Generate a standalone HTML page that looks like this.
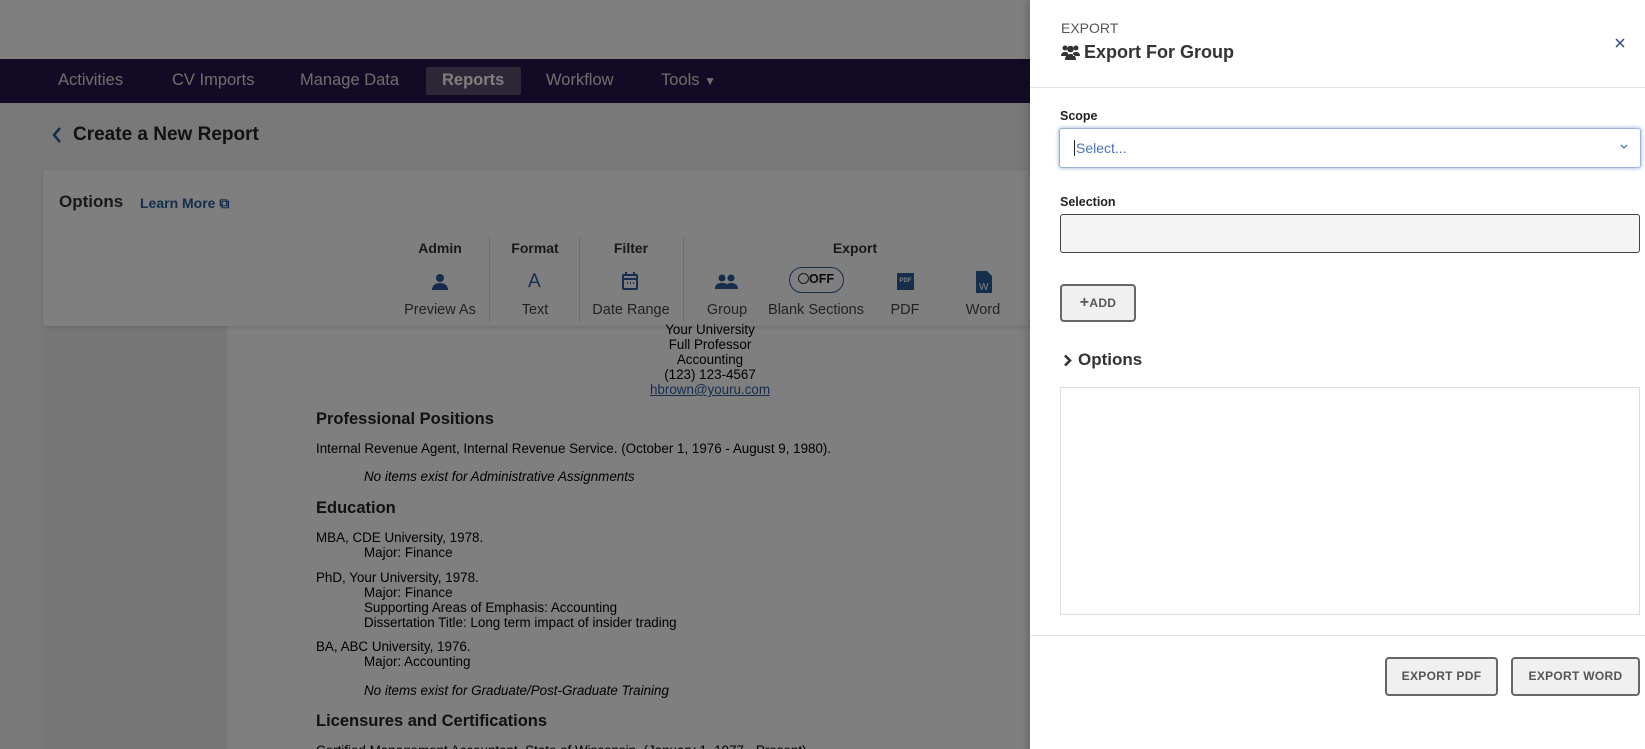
<!DOCTYPE html>
<html><head><meta charset="utf-8"><style>
*{box-sizing:border-box;margin:0;padding:0}
html{background:#808080;overflow:hidden}
body{width:1645px;height:749px;overflow:hidden;position:relative;background:#f3f3f3;font-family:"Liberation Sans",Arial,sans-serif;color:#333}
.a{position:absolute;white-space:nowrap}
.nav{position:absolute;left:0;top:59px;width:1645px;height:44px;background:#27164a}
.nav span{position:absolute;top:12px;font-size:16.5px;color:#ddd}
.card{position:absolute;left:43px;top:170px;width:1100px;height:156px;background:#fff;box-shadow:0 1px 4px rgba(0,0,0,.15);border-radius:3px}
.hd{font-size:14px;font-weight:bold;color:#333;text-align:center;width:100px;margin-left:-50px}
.lb{font-size:14.5px;color:#444;text-align:center;width:120px;margin-left:-60px}
.dv{position:absolute;top:236px;width:1px;height:86px;background:#ddd}
.doc{font-size:13.4px;color:#000;line-height:15px}
.h{font-size:16.5px;font-weight:bold;color:#222}
.ov{position:absolute;left:0;top:0;width:1030px;height:760px;background:rgba(0,0,0,.5)}
.panel{position:absolute;left:1030px;top:0;width:615px;height:760px;background:#fff;box-shadow:-2px 0 8px rgba(0,0,0,.2)}
.btn{position:absolute;border:2px solid #666;border-radius:4px;background:#f0f0f0;font-size:12px;font-weight:bold;color:#555;text-align:center;letter-spacing:.3px}
</style></head><body>
<div style="position:absolute;left:0;top:0;width:1645px;height:59px;background:#fff"></div>
<div class="nav">
<span style="left:58px">Activities</span>
<span style="left:172px">CV Imports</span>
<span style="left:300px">Manage Data</span>
<div style="position:absolute;left:426px;top:8px;width:95px;height:28px;background:#5a4e70;border-radius:2px"></div>
<span style="left:442px;font-weight:bold;color:#fff">Reports</span>
<span style="left:546px">Workflow</span>
<span style="left:661px">Tools <span style="position:static;font-size:12px">▼</span></span>
</div>
<svg class="a" style="left:52px;top:127px" width="10" height="16" viewBox="0 0 10 16" fill="none" stroke="#2a5d9a" stroke-width="2.5"><path d="M8 1L2 8l6 7"/></svg>
<div class="a" style="left:73px;top:124px;font-size:19px;font-weight:bold;color:#222">Create a New Report</div>
<div style="position:absolute;left:44px;top:326px;width:183px;height:430px;background:#ececec"></div>
<div style="position:absolute;left:227px;top:326px;width:803px;height:430px;background:#fff"></div>
<div class="card"></div>
<div class="a" style="left:59px;top:192px;font-size:17px;font-weight:bold;color:#333">Options</div>
<div class="a" style="left:140px;top:195px;font-size:14px;font-weight:bold;color:#2a5d9a">Learn More &#x29C9;</div>
<div class="a hd" style="left:440px;top:240px">Admin</div>
<div class="a hd" style="left:535px;top:240px">Format</div>
<div class="a hd" style="left:631px;top:240px">Filter</div>
<div class="a hd" style="left:855px;top:240px">Export</div>
<div class="dv" style="left:489px"></div><div class="dv" style="left:579px"></div><div class="dv" style="left:683px"></div>
<svg class="a" style="left:431px;top:273px" width="18" height="18" viewBox="0 0 18 18" fill="#2a5d9a"><circle cx="9" cy="5" r="4"/><path d="M1 17c0-5 4-7 8-7s8 2 8 7z"/></svg>
<div class="a" style="left:528px;top:271px;font-size:19px;color:#2a5d9a">A</div>
<svg class="a" style="left:621px;top:271px" width="18" height="20" viewBox="0 0 18 20" fill="none" stroke="#2a5d9a" stroke-width="2"><rect x="2" y="4" width="14" height="14" rx="1"/><path d="M5 1v4M13 1v4M2 8h14"/><path d="M6 12h1M9 12h1M12 12h1" /></svg>
<svg class="a" style="left:715px;top:274px" width="24" height="16" viewBox="0 0 24 16" fill="#2a5d9a"><circle cx="7" cy="4" r="3.5"/><circle cx="16" cy="4" r="3.5"/><path d="M0 15c0-5 3-6 7-6s7 1 7 6zM11 15c0-5 2-6 5-6s7 1 7 6z"/></svg>
<div class="a" style="left:789px;top:267px;width:55px;height:26px;border:1.5px solid #2a5d9a;border-radius:13px;font-size:12.5px;font-weight:bold;color:#111;padding:4px 0 0 8px"><span style="display:inline-block;width:11px;height:11px;border:1px solid #333;border-radius:50%;vertical-align:-1px"></span>OFF</div>
<div class="a" style="left:897px;top:273px;width:17px;height:17px;background:#2a5d9a;color:#fff;font-size:6px;font-weight:bold;text-align:center;line-height:17px">PDF</div>
<svg class="a" style="left:976px;top:271px" width="16" height="22" viewBox="0 0 16 22"><path d="M0 0h11l5 5v17H0z" fill="#2a5d9a"/><text x="3" y="19" font-size="10" fill="#fff" font-family="Liberation Sans">W</text></svg>
<div class="a lb" style="left:440px;top:302px">Preview As</div>
<div class="a lb" style="left:535px;top:302px">Text</div>
<div class="a lb" style="left:631px;top:302px">Date Range</div>
<div class="a lb" style="left:727px;top:302px">Group</div>
<div class="a lb" style="left:816px;top:302px">Blank Sections</div>
<div class="a lb" style="left:905px;top:302px">PDF</div>
<div class="a lb" style="left:983px;top:302px">Word</div>
<div class="a doc" style="left:610px;top:322px;width:200px;text-align:center">Your University<br>Full Professor<br>Accounting<br>(123) 123-4567<br><span style="color:#2a5d9a;text-decoration:underline">hbrown@youru.com</span></div>
<div class="a doc" style="left:316px;top:412px"><span class="h">Professional Positions</span></div>
<div class="a doc" style="left:316px;top:441px">Internal Revenue Agent, Internal Revenue Service. (October 1, 1976 - August 9, 1980).</div>
<div class="a doc" style="left:364px;top:469px;font-style:italic">No items exist for Administrative Assignments</div>
<div class="a doc" style="left:316px;top:501px"><span class="h">Education</span></div>
<div class="a doc" style="left:316px;top:530px">MBA, CDE University, 1978.<br><span style="padding-left:48px">Major: Finance</span></div>
<div class="a doc" style="left:316px;top:570px">PhD, Your University, 1978.<br><span style="padding-left:48px">Major: Finance</span><br><span style="padding-left:48px">Supporting Areas of Emphasis: Accounting</span><br><span style="padding-left:48px">Dissertation Title: Long term impact of insider trading</span></div>
<div class="a doc" style="left:316px;top:639px">BA, ABC University, 1976.<br><span style="padding-left:48px">Major: Accounting</span></div>
<div class="a doc" style="left:364px;top:683px;font-style:italic">No items exist for Graduate/Post-Graduate Training</div>
<div class="a doc" style="left:316px;top:714px"><span class="h">Licensures and Certifications</span></div>
<div class="a doc" style="left:316px;top:743px">Certified Management Accountant, State of Wisconsin. (January 1, 1977 - Present).</div>
<div class="ov"></div>
<div class="panel">
<div class="a" style="left:31px;top:20px;font-size:14px;color:#555">EXPORT</div>
<svg class="a" style="left:31px;top:44px" width="19" height="16" viewBox="0 0 19 16" fill="#333"><circle cx="4" cy="4" r="2.5"/><circle cx="15" cy="4" r="2.5"/><circle cx="9.5" cy="5" r="3.3"/><path d="M0 12c0-3 2-4 4-4s3 1 3 1v3zM19 12c0-3-2-4-4-4s-3 1-3 1v3zM4 16c0-4 2-6 5.5-6s5.5 2 5.5 6z"/></svg>
<div class="a" style="left:54px;top:42px;font-size:18px;font-weight:bold;color:#333">Export For Group</div>
<svg class="a" style="left:585px;top:38px" width="10" height="10" viewBox="0 0 10 10" stroke="#2a4a8a" stroke-width="1.5"><path d="M1 1l8 8M9 1l-8 8"/></svg>
<div style="position:absolute;left:0;top:87px;width:615px;height:1px;background:#e2e2e2"></div>
<div class="a" style="left:30px;top:109px;font-size:12.5px;font-weight:bold;color:#222">Scope</div>
<div class="a" style="left:29px;top:128px;width:582px;height:40px;border:1px solid #9ab3d8;border-radius:3px;box-shadow:0 0 3px 1px #b6c9e6"></div>
<div class="a" style="left:44px;top:140px;font-size:14px;color:#4a74b8;border-left:1px solid #222;padding-left:1px;line-height:16px">Select...</div>
<svg class="a" style="left:590px;top:144px" width="8" height="6" viewBox="0 0 8 6" fill="none" stroke="#4a74b8" stroke-width="1.3"><path d="M1 1l3 3 3-3"/></svg>
<div class="a" style="left:30px;top:195px;font-size:12.5px;font-weight:bold;color:#222">Selection</div>
<div class="a" style="left:30px;top:214px;width:580px;height:39px;border:1px solid #444;border-radius:3px;background:#f4f4f4"></div>
<div class="btn" style="left:30px;top:284px;width:76px;height:38px;line-height:34px"><span style="font-size:16px">+</span>ADD</div>
<svg class="a" style="left:33px;top:354px" width="9" height="13" viewBox="0 0 9 13" fill="none" stroke="#333" stroke-width="2.6"><path d="M2 1.5l5 5-5 5"/></svg>
<div class="a" style="left:48px;top:350px;font-size:17px;font-weight:bold;color:#333">Options</div>
<div class="a" style="left:30px;top:387px;width:580px;height:228px;border:1px solid #ddd"></div>
<div style="position:absolute;left:0;top:635px;width:615px;height:1px;background:#e2e2e2"></div>
<div class="btn" style="left:355px;top:657px;width:113px;height:39px;line-height:35px">EXPORT PDF</div>
<div class="btn" style="left:481px;top:657px;width:129px;height:39px;line-height:35px">EXPORT WORD</div>
</div>
</body></html>
